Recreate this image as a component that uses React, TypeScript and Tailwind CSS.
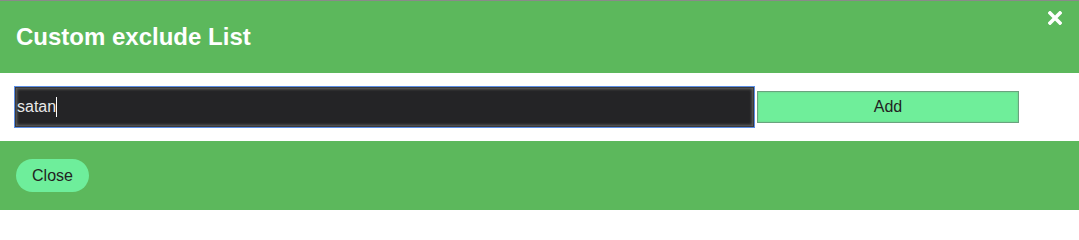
import React from 'react';

export default function App() {
  return (
    <div className="w-[1079px] h-[210px] flex flex-col border-t border-[#8a8a8a] font-['Liberation_Sans',Arial,sans-serif]">
      <div className="relative h-[72px] bg-[#5cb85c] flex items-center px-4">
        <h2 className="text-[24px] font-bold text-white leading-none">Custom exclude List</h2>
        <svg
          className="absolute right-[17px] top-[10px]"
          width="14"
          height="14"
          viewBox="0 0 14 14"
          aria-label="close"
        >
          <path d="M2 2 L12 12 M12 2 L2 12" stroke="white" strokeWidth="3.6" strokeLinecap="square" />
        </svg>
      </div>
      <div className="h-[68px] bg-white flex items-center pl-[15px] gap-[3px]">
        <div className="w-[739px] h-[40px] ring-1 ring-[#5b8ee6] border border-[#3a3a3c] bg-[#242426] shadow-[inset_0_0_3px_1px_#666] flex items-center pl-[1px]">
          <span className="text-[#e8e8e8] text-[16px]">satan</span>
          <span className="w-px h-[20px] bg-white" />
        </div>
        <button className="w-[262px] h-[32px] bg-[#6fee9a] border border-[#6aa37e] shadow-[inset_0_0_2px_#7bbd8f] text-[16px] text-[#222]">
          Add
        </button>
      </div>
      <div className="flex-1 bg-[#5cb85c] flex items-center pl-4">
        <button className="w-[73px] h-[33px] rounded-full bg-[#6eee9b] text-[16px] text-[#222]">Close</button>
      </div>
    </div>
  );
}
